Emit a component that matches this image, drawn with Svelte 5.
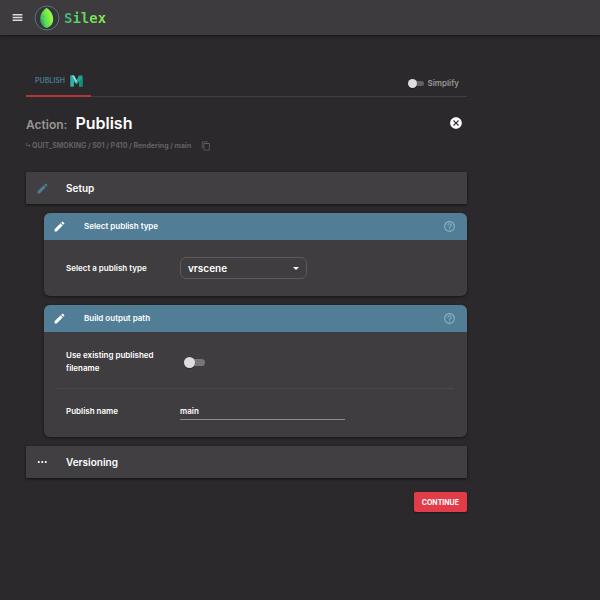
<script>
  let simplify = $state(false);
  let existing = $state(false);
  let publishType = $state('vrscene');
  let publishName = $state('main');
</script>

{#snippet pencil()}
  <svg class="pencil" viewBox="0 0 24 24" aria-hidden="true">
    <path d="M3 17.25V21h3.75L17.81 9.94l-3.75-3.75L3 17.25zM20.71 7.04a1 1 0 0 0 0-1.41l-2.34-2.34a1 1 0 0 0-1.41 0l-1.83 1.83 3.75 3.75 1.83-1.83z" />
  </svg>
{/snippet}

{#snippet help()}
  <button class="icon help" aria-label="Help">
    <svg viewBox="0 0 24 24" aria-hidden="true">
      <path d="M11 18h2v-2h-2v2zm1-16C6.48 2 2 6.48 2 12s4.48 10 10 10 10-4.48 10-10S17.52 2 12 2zm0 18c-4.41 0-8-3.59-8-8s3.59-8 8-8 8 3.59 8 8-3.59 8-8 8zm0-14c-2.21 0-4 1.79-4 4h2c0-1.1.9-2 2-2s2 .9 2 2c0 2-3 1.75-3 5h2c0-2.25 3-2.5 3-5 0-2.21-1.79-4-4-4z" />
    </svg>
  </button>
{/snippet}

<div class="app">
  <header>
    <button class="icon menu" aria-label="Menu">
      <svg viewBox="0 0 24 24" aria-hidden="true"><path d="M3 18.500h18v-3H3v3zm0-5h18v-3H3v3zm0-8v3h18v-3H3z" /></svg>
    </button>
    <svg class="logo" viewBox="0 0 26 26" aria-hidden="true">
      <defs>
        <linearGradient id="leaf" x1="0" y1="0.8" x2="0.8" y2="0.4">
          <stop offset="0" stop-color="#2f7f90" />
          <stop offset="0.35" stop-color="#4fd653" />
          <stop offset="1" stop-color="#93f548" />
        </linearGradient>
      </defs>
      <circle cx="13" cy="13" r="12" fill="#353638" stroke="#55757b" />
      <path d="M12.500 3C9 5 6.200 9.500 6.200 14c0 4 2.300 7.300 5.400 8.400l1.400.6 1.300-.7c3-1.300 4.900-4.300 4.900-8.100C19.200 9.500 16.500 5 12.500 3z" fill="url(#leaf)" />
      <path d="M8.500 10.500l2 2M7.500 14l2.500 2.500M8.500 18l2.500 2" stroke="#2d8478" stroke-width="0.600" fill="none" />
    </svg>
    <span class="brand">Silex</span>
  </header>

  <main>
    <div class="tabs">
      <a class="tab" href="#publish">
        PUBLISH
        <svg viewBox="0 0 13 12" aria-hidden="true">
          <path d="M.500.500h3.500L6.500 5 9 .500h3.500v11H9V6.500L6.500 9.500 4 6.500v5H.500z" fill="#1fa595" />
          <path d="M.500.500h3v11h-3z" fill="#35b0a6" />
          <path d="M2 .500h2L7 6 6 8z" fill="#9ad6d6" />
          <path d="M9 6.500v5h3.500V3z" fill="#178e7c" />
        </svg>
      </a>
      <label class="simplify">
        <input class="switch small" type="checkbox" bind:checked={simplify} />
        Simplify
      </label>
    </div>

    <div class="title">
      <span class="kind">Action:</span>
      <h1>Publish</h1>
      <button class="icon close" aria-label="Close">
        <svg viewBox="0 0 24 24" aria-hidden="true">
          <path d="M12 2C6.470 2 2 6.470 2 12s4.470 10 10 10 10-4.470 10-10S17.530 2 12 2zm5 13.590L15.590 17 12 13.410 8.410 17 7 15.590 10.590 12 7 8.410 8.410 7 12 10.590 15.590 7 17 8.410 13.410 12 17 15.590z" />
        </svg>
      </button>
    </div>

    <div class="path">
      <svg class="turn" viewBox="0 0 5 6" aria-hidden="true"><path d="M.500 0v2.500H4M2.800 1L4.300 2.500 2.800 4" /></svg>
      <span>QUIT_SMOKING / S01 / P410 / Rendering / main</span>
      <button class="icon copy" aria-label="Copy path">
        <svg viewBox="0 0 24 24" aria-hidden="true">
          <path d="M16 1H4c-1.100 0-2 .9-2 2v14h2V3h12V1zm3 4H8c-1.100 0-2 .9-2 2v14c0 1.100.9 2 2 2h11c1.100 0 2-.9 2-2V7c0-1.100-.9-2-2-2zm0 16H8V7h11v14z" />
        </svg>
      </button>
    </div>

    <section class="step active">
      {@render pencil()}
      <h2>Setup</h2>
    </section>

    <div class="cards">
      <section class="card">
        <div class="head">
          {@render pencil()}
          <h3>Select publish type</h3>
          {@render help()}
        </div>
        <div class="body">
          <div class="row">
            <label for="type">Select a publish type</label>
            <div class="select">
              <select id="type" bind:value={publishType}>
                <option value="vrscene">vrscene</option>
              </select>
              <svg viewBox="0 0 6 3" aria-hidden="true"><path d="M0 0h6L3 3z" /></svg>
            </div>
          </div>
        </div>
      </section>

      <section class="card">
        <div class="head">
          {@render pencil()}
          <h3>Build output path</h3>
          {@render help()}
        </div>
        <div class="body">
          <div class="row tall">
            <label for="existing">Use existing published filename</label>
            <input id="existing" class="switch" type="checkbox" bind:checked={existing} />
          </div>
          <hr />
          <div class="row short">
            <label for="name">Publish name</label>
            <input id="name" class="text" type="text" bind:value={publishName} />
          </div>
        </div>
      </section>
    </div>

    <section class="step">
      <svg class="dots" viewBox="0 0 13 13" aria-hidden="true">
        <circle cx="2.800" cy="6" r="1.100" /><circle cx="6.300" cy="6" r="1.100" /><circle cx="9.800" cy="6" r="1.100" />
      </svg>
      <h2>Versioning</h2>
    </section>

    <div class="actions">
      <button class="continue">CONTINUE</button>
    </div>
  </main>
</div>

<style>
  :global(body) {
    margin: 0;
    background: #2b292b;
  }
  .app {
    min-height: 100vh;
    color: #fff;
    font: 600 8px/13px Inter, "Liberation Sans", sans-serif;
  }
  .app * {
    box-sizing: border-box;
  }
  h1, h2, h3 {
    margin: 0;
    font-weight: 600;
  }
  svg {
    display: block;
    fill: currentColor;
    flex: none;
  }
  button, input, select {
    font: inherit;
    color: inherit;
  }
  .icon {
    padding: 0;
    border: 0;
    background: none;
    cursor: pointer;
  }
  header {
    display: flex;
    align-items: center;
    height: 35px;
    padding-left: 11px;
    background: #3d3b3d;
    box-shadow: 0 1px 3px rgba(0, 0, 0, 0.5);
  }
  .menu svg {
    width: 13px;
    height: 13px;
    color: #dddbdd;
  }
  .logo {
    width: 26px;
    height: 26px;
    margin-left: 10px;
  }
  .brand {
    margin-left: 4px;
    font: 700 14px/18px "DejaVu Sans Mono", monospace;
    background: linear-gradient(100deg, #3fae80, #5fdc5c 40%, #8cf04d);
    background-clip: text;
    color: transparent;
  }
  main {
    padding: 31px 133px 24px 26px;
  }
  .tabs {
    display: flex;
    justify-content: space-between;
    height: 31px;
    border-bottom: 1px solid #403e40;
  }
  .tab {
    display: flex;
    align-items: center;
    gap: 5px;
    height: 31px;
    padding: 0 8px 0 9px;
    border-bottom: 2px solid #b53538;
    color: #487a92;
    font-size: 7px;
    text-decoration: none;
  }
  .tab svg {
    width: 13px;
    height: 12px;
  }
  .simplify {
    display: flex;
    align-items: center;
    gap: 4px;
    padding-right: 8px;
    padding-top: 4px;
    color: #989698;
  }
  .switch {
    position: relative;
    flex: none;
    width: 21px;
    height: 11px;
    margin: 0;
    appearance: none;
    cursor: pointer;
  }
  .switch::before {
    content: "";
    position: absolute;
    inset: 2px 0 2px 4px;
    border-radius: 4px;
    background: #777577;
  }
  .switch::after {
    content: "";
    position: absolute;
    left: 0;
    top: 0;
    width: 11px;
    height: 11px;
    border-radius: 50%;
    background: #dedcde;
    box-shadow: 0 1px 1px rgba(0, 0, 0, 0.3);
  }
  .switch:checked::after {
    left: 10px;
  }
  .switch.small {
    width: 16px;
    height: 9px;
  }
  .switch.small::before {
    background: #626062;
  }
  .switch.small::after {
    width: 9px;
    height: 9px;
  }
  .switch.small:checked::after {
    left: 7px;
  }
  .title {
    display: flex;
    align-items: baseline;
    gap: 8px;
    height: 24px;
    margin-top: 14px;
    line-height: 24px;
  }
  .kind {
    color: #989698;
    font-size: 12px;
  }
  h1 {
    font-size: 16px;
  }
  .close {
    align-self: center;
    margin-left: auto;
    margin-right: 4px;
  }
  .close svg {
    width: 14px;
    height: 14px;
  }
  .path {
    display: flex;
    align-items: center;
    height: 13px;
    margin-top: 4px;
    color: #636163;
    font-size: 7px;
    font-weight: 700;
  }
  .turn {
    width: 5px;
    height: 6px;
    margin-right: 1px;
    fill: none;
    stroke: currentColor;
    stroke-width: 0.7;
  }
  .copy {
    margin-left: 10px;
  }
  .copy svg {
    width: 10px;
    height: 10px;
  }
  .step {
    display: flex;
    align-items: center;
    height: 32px;
    padding-left: 10px;
    border-radius: 1px;
    background: #423f42;
    box-shadow: 0 1px 3px rgba(0, 0, 0, 0.6);
  }
  .step.active {
    margin-top: 20px;
  }
  .step.active .pencil {
    color: #4f7d93;
  }
  .pencil, .dots {
    width: 13px;
    height: 13px;
  }
  h2 {
    margin-left: 17px;
    font-size: 10px;
  }
  .cards {
    display: grid;
    gap: 9px;
    padding: 9px 0 9px 18px;
  }
  .card {
    border-radius: 6px;
    overflow: hidden;
    background: #403d40;
    box-shadow: 0 1px 3px rgba(0, 0, 0, 0.5);
  }
  .head {
    display: flex;
    align-items: center;
    height: 27px;
    padding: 0 11px 0 9px;
    background: #517e96;
  }
  h3 {
    margin-left: 18px;
    font-size: 8px;
  }
  .help {
    margin-left: auto;
    color: #8bb0bd;
  }
  .help svg {
    width: 13px;
    height: 13px;
  }
  .body {
    padding: 0 13px;
  }
  .row {
    display: flex;
    align-items: center;
    gap: 14px;
    height: 56px;
    padding-left: 9px;
  }
  .row label {
    flex: none;
    width: 100px;
  }
  .row.tall {
    padding-top: 4px;
  }
  .row.tall .switch {
    margin-left: 4px;
  }
  .row.short {
    height: 48px;
    padding-bottom: 4px;
  }
  hr {
    height: 1px;
    margin: 0;
    border: 0;
    background: #4a484a;
  }
  .select {
    position: relative;
    width: 127px;
  }
  .select select {
    display: block;
    width: 100%;
    height: 22px;
    padding: 0 7px;
    border: 1px solid #5c5a5c;
    border-radius: 6px;
    appearance: none;
    background: transparent;
    font-size: 10px;
    line-height: 13px;
  }
  .select svg {
    position: absolute;
    right: 8px;
    top: 10px;
    width: 6px;
    height: 3px;
    pointer-events: none;
  }
  .text {
    width: 165px;
    height: 18px;
    padding: 0;
    border: 0;
    border-bottom: 1px solid #8d8a88;
    border-radius: 0;
    outline: none;
    background: transparent;
  }
  .actions {
    display: flex;
    justify-content: flex-end;
    margin-top: 14px;
  }
  .continue {
    height: 20px;
    padding: 0 8px;
    border: 0;
    border-radius: 2px;
    background: #e23c48;
    box-shadow: 0 1px 2px rgba(0, 0, 0, 0.4);
    font-size: 7px;
    font-weight: 700;
    cursor: pointer;
  }
</style>
